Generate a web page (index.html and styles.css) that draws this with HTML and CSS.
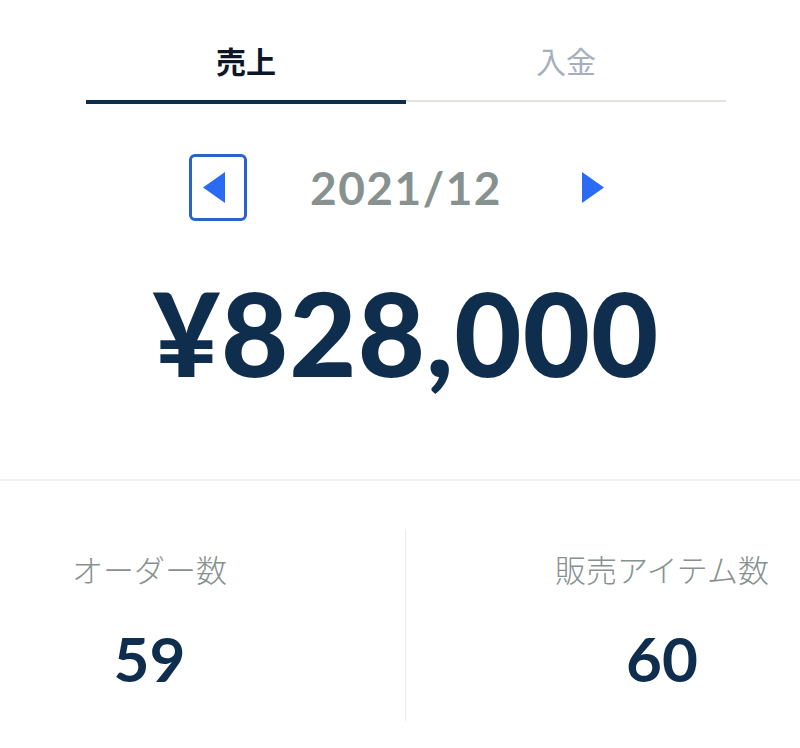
FILE: index.html
```html
<!DOCTYPE html>
<html lang="ja">
<head>
<meta charset="utf-8">
<link rel="stylesheet" href="styles.css">
</head>
<body>
<div class="content">
  <div class="tabs">
    <div class="tab tab-active">売上</div>
    <div class="tab">入金</div>
  </div>
  <div class="month-nav">
    <button class="nav-btn nav-btn-focus" aria-label="前月">
      <svg width="22" height="31" viewBox="0 0 22 31"><polygon points="22,0 22,31 0,15.5" fill="#2b6af2"/></svg>
    </button>
    <div class="month">2021/12</div>
    <button class="nav-btn" aria-label="翌月">
      <svg width="22" height="31" viewBox="0 0 22 31"><polygon points="0,0 0,31 22,15.5" fill="#2b6af2"/></svg>
    </button>
  </div>
  <div class="amount">¥828,000</div>
</div>
<div class="divider"></div>
<div class="stats">
  <div class="stat stat-left">
    <div class="stat-inner">
      <div class="stat-label">オーダー数</div>
      <div class="stat-value">59</div>
    </div>
  </div>
  <div class="stat stat-right">
    <div class="stat-inner">
      <div class="stat-label">販売アイテム数</div>
      <div class="stat-value">60</div>
    </div>
  </div>
</div>
</body>
</html>
```
FILE: styles.css
```css
* { box-sizing: border-box; }
body {
  margin: 0;
  background: #ffffff;
  font-family: "Lato", "Noto Sans CJK JP", sans-serif;
  width: 800px;
  overflow: hidden;
}
.content {
  width: 640px;
  margin-left: 86px;
}
.tabs {
  display: flex;
  align-items: flex-start;
}
.tab {
  flex: 1;
  text-align: center;
  font-family: "Noto Sans CJK JP", sans-serif;
  font-size: 30px;
  line-height: 40px;
  padding: 40px 0 20px;
  color: #a7afbd;
  border-bottom: 2px solid #e2e2df;
}
.tab-active {
  color: #0b1628;
  font-weight: 700;
  border-bottom: 4px solid #0f2d4d;
}
.month-nav {
  display: flex;
  justify-content: center;
  align-items: center;
  margin-top: 50px;
}
.nav-btn {
  width: 58px;
  height: 67px;
  border: 3px solid transparent;
  border-radius: 6px;
  background: none;
  padding: 0;
  display: flex;
  align-items: center;
  justify-content: center;
}
.nav-btn-focus {
  border-color: #2a62c8;
}
.nav-btn-focus svg { margin-left: -8px; }
.nav-btn:not(.nav-btn-focus) svg { margin-left: -2px; }
.month {
  width: 318px;
  text-align: center;
  font-size: 46px;
  font-weight: 700;
  color: #87918f;
  letter-spacing: 1.5px;
}
.amount {
  margin-top: 54px;
  text-align: center;
  font-size: 116px;
  line-height: 116px;
  font-weight: 900;
  color: #0f2d4c;
  letter-spacing: 1px;
}
.divider {
  margin-top: 88px;
  height: 2px;
  background: #f1f1f0;
}
.stats {
  display: flex;
  margin-top: 48px;
}
.stat {
  height: 192px;
}
.stat-left {
  width: 406px;
  border-right: 1px solid #ececec;
  padding-left: 72px;
}
.stat-right {
  flex: 1;
  padding-left: 149px;
}
.stat-inner {
  display: inline-flex;
  flex-direction: column;
  align-items: center;
  padding-top: 20px;
}
.stat-label {
  font-family: "Noto Sans CJK JP", sans-serif;
  font-size: 31px;
  line-height: 40px;
  font-weight: 300;
  color: #87918f;
}
.stat-value {
  margin-top: 38px;
  font-size: 62px;
  line-height: 62px;
  font-weight: 700;
  color: #0f2d4c;
}
```
